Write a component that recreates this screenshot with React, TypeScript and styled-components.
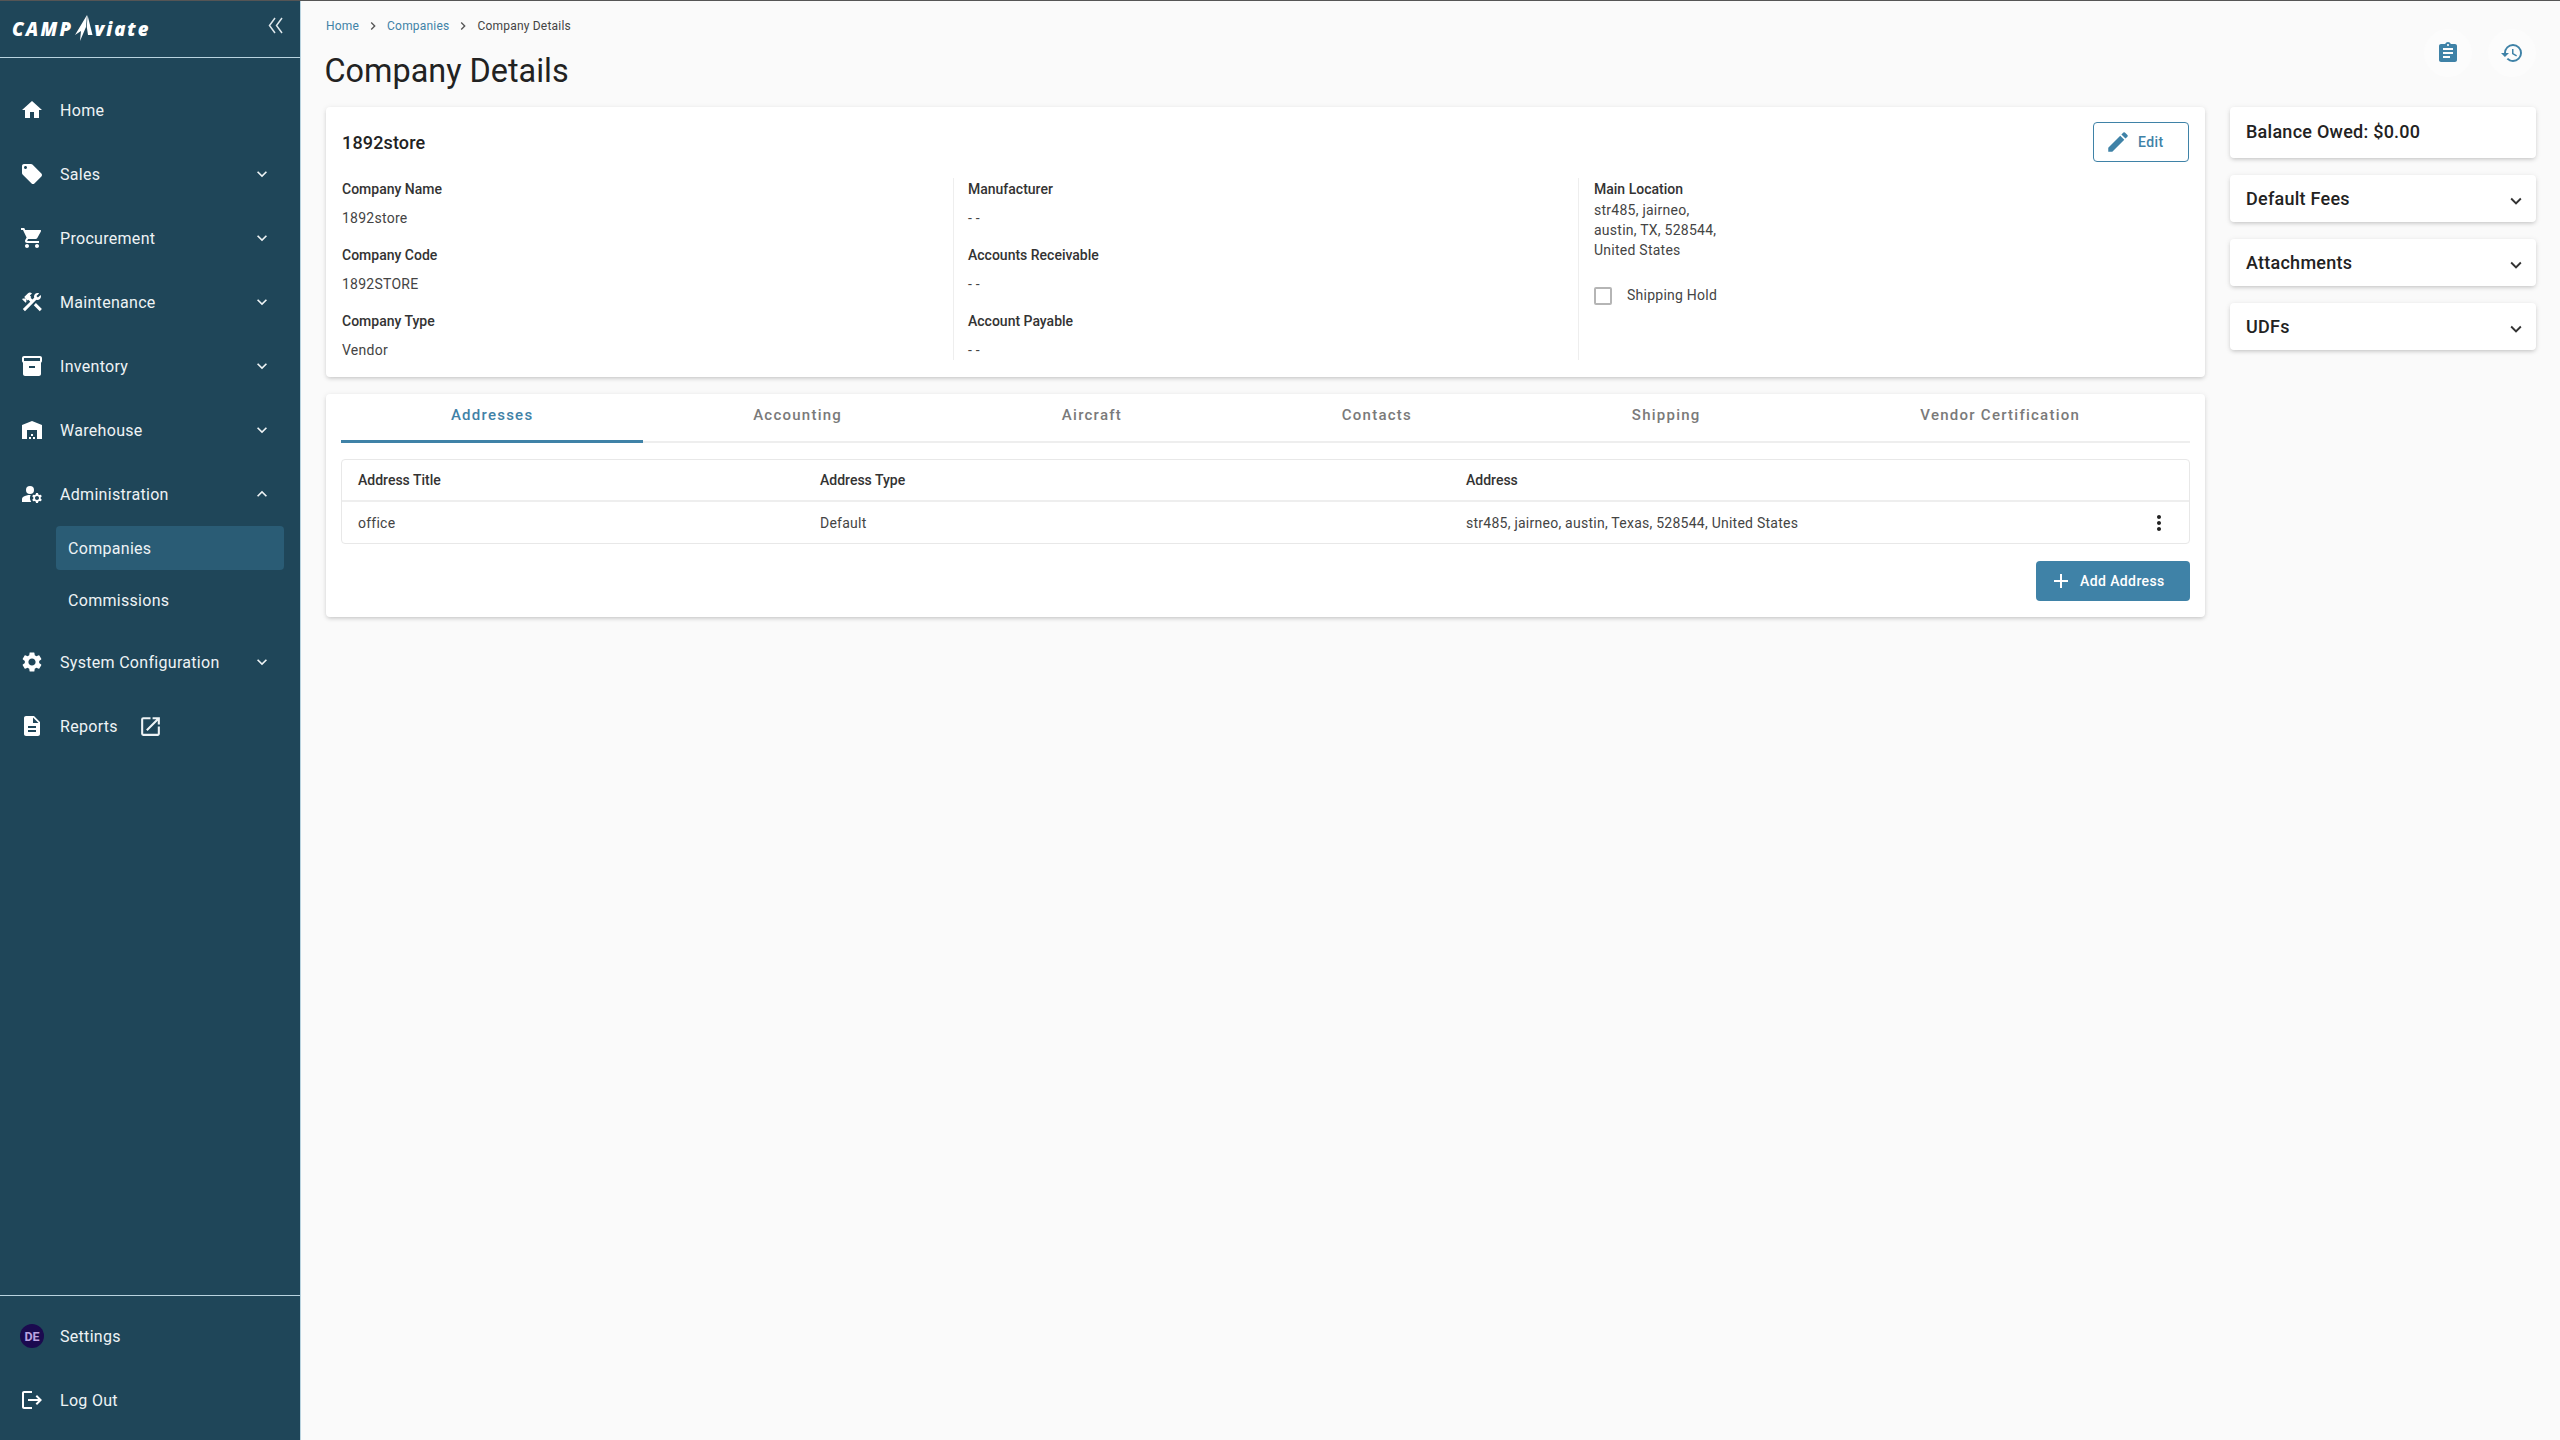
import React from 'react';
import styled, { createGlobalStyle } from 'styled-components';
import {
  MdHome,
  MdLocalOffer,
  MdShoppingCart,
  MdConstruction,
  MdInventory2,
  MdWarehouse,
  MdManageAccounts,
  MdSettings,
  MdDescription,
  MdOpenInNew,
  MdLogout,
  MdExpandMore,
  MdExpandLess,
  MdEdit,
  MdAdd,
  MdMoreVert,
  MdAssignment,
  MdHistory,
  MdChevronRight,
} from 'react-icons/md';

const GlobalStyle = createGlobalStyle`
  html, body {
    margin: 0;
    padding: 0;
    background: #fafafa;
    font-family: Roboto, "Liberation Sans", sans-serif;
    color: #222;
  }
  * { box-sizing: border-box; }
`;

const navItems = [
  { label: 'Home', icon: MdHome },
  { label: 'Sales', icon: MdLocalOffer, arrow: 'down' },
  { label: 'Procurement', icon: MdShoppingCart, arrow: 'down' },
  { label: 'Maintenance', icon: MdConstruction, arrow: 'down' },
  { label: 'Inventory', icon: MdInventory2, arrow: 'down' },
  { label: 'Warehouse', icon: MdWarehouse, arrow: 'down' },
  { label: 'Administration', icon: MdManageAccounts, arrow: 'up', children: ['Companies', 'Commissions'] },
  { label: 'System Configuration', icon: MdSettings, arrow: 'down' },
];

const fields = [
  [
    { label: 'Company Name', value: '1892store' },
    { label: 'Company Code', value: '1892STORE' },
    { label: 'Company Type', value: 'Vendor' },
  ],
  [
    { label: 'Manufacturer', value: '- -' },
    { label: 'Accounts Receivable', value: '- -' },
    { label: 'Account Payable', value: '- -' },
  ],
];

const tabs = ['Addresses', 'Accounting', 'Aircraft', 'Contacts', 'Shipping', 'Vendor Certification'];

const App: React.FC = () => {
  return (
    <Page>
      <GlobalStyle />
      <Sidebar>
        <Brand>
          <Logo>
            <LogoCamp>CAMP</LogoCamp>
            <LogoSpike viewBox="0 0 19 28" aria-hidden="true">
              <path d="M13 1 L1 21 L7 17 L6 27 L12 13 Z M13.5 1 L18.5 21 L14 21 L12.8 13 Z" fill="#fff" />
            </LogoSpike>
            <LogoRest>viate</LogoRest>
          </Logo>
          <CollapseButton>
            <svg width="15" height="17" viewBox="0 0 15 17" fill="none" stroke="currentColor" strokeWidth="1.5">
              <path d="M7 1 L1.5 8.5 L7 16" />
              <path d="M14 1 L8.5 8.5 L14 16" />
            </svg>
          </CollapseButton>
        </Brand>
        <NavList>
          {navItems.map((item) => (
            <React.Fragment key={item.label}>
              <NavItem>
                <NavIcon>
                  <item.icon size={24} />
                </NavIcon>
                <NavLabel>{item.label}</NavLabel>
                {item.arrow === 'down' && <NavArrow><MdExpandMore size={20} /></NavArrow>}
                {item.arrow === 'up' && <NavArrow><MdExpandLess size={20} /></NavArrow>}
              </NavItem>
              {item.children && (
                <SubList>
                  {item.children.map((child) => (
                    <SubItem key={child} $active={child === 'Companies'}>{child}</SubItem>
                  ))}
                </SubList>
              )}
            </React.Fragment>
          ))}
          <NavItem>
            <NavIcon>
              <MdDescription size={24} />
            </NavIcon>
            <NavLabel>Reports</NavLabel>
            <ExternalIcon><MdOpenInNew size={25} /></ExternalIcon>
          </NavItem>
        </NavList>
        <SidebarFooter>
          <NavItem>
            <NavIcon>
              <Avatar>DE</Avatar>
            </NavIcon>
            <NavLabel>Settings</NavLabel>
          </NavItem>
          <NavItem>
            <NavIcon>
              <MdLogout size={24} />
            </NavIcon>
            <NavLabel>Log Out</NavLabel>
          </NavItem>
        </SidebarFooter>
      </Sidebar>

      <Main>
        <PageHeader>
          <div>
            <Breadcrumbs>
              <Crumb>Home</Crumb>
              <MdChevronRight size={16} />
              <Crumb>Companies</Crumb>
              <MdChevronRight size={16} />
              <CurrentCrumb>Company Details</CurrentCrumb>
            </Breadcrumbs>
            <Title>Company Details</Title>
          </div>
          <HeaderActions>
            <RoundButton><MdAssignment size={24} /></RoundButton>
            <RoundButton><MdHistory size={24} /></RoundButton>
          </HeaderActions>
        </PageHeader>

        <Columns>
          <LeftColumn>
            <DetailsCard>
              <CardHeader>
                <CompanyName>1892store</CompanyName>
                <EditButton>
                  <MdEdit size={26} />
                  Edit
                </EditButton>
              </CardHeader>
              <DetailsGrid>
                {fields.map((col, i) => (
                  <DetailColumn key={i} $middle={i === 1}>
                    {col.map((field) => (
                      <Field key={field.label}>
                        <FieldLabel>{field.label}</FieldLabel>
                        <FieldValue>{field.value}</FieldValue>
                      </Field>
                    ))}
                  </DetailColumn>
                ))}
                <DetailColumn>
                  <FieldLabel>Main Location</FieldLabel>
                  <AddressLine>str485, jairneo,</AddressLine>
                  <AddressLine>austin, TX, 528544,</AddressLine>
                  <AddressLine>United States</AddressLine>
                  <CheckRow>
                    <CheckBox />
                    <span>Shipping Hold</span>
                  </CheckRow>
                </DetailColumn>
              </DetailsGrid>
            </DetailsCard>

            <TabsCard>
              <TabList>
                {tabs.map((tab) => (
                  <Tab key={tab} $active={tab === 'Addresses'}>{tab}</Tab>
                ))}
              </TabList>
              <Table>
                <TableHead>
                  <HeadCell>Address Title</HeadCell>
                  <HeadCell>Address Type</HeadCell>
                  <HeadCell>Address</HeadCell>
                </TableHead>
                <TableRow>
                  <Cell>office</Cell>
                  <Cell>Default</Cell>
                  <Cell>str485, jairneo, austin, Texas, 528544, United States</Cell>
                  <RowMenu><MdMoreVert size={24} /></RowMenu>
                </TableRow>
              </Table>
              <TableActions>
                <AddButton>
                  <MdAdd size={24} />
                  Add Address
                </AddButton>
              </TableActions>
            </TabsCard>
          </LeftColumn>

          <RightColumn>
            <BalanceCard>Balance Owed: $0.00</BalanceCard>
            {['Default Fees', 'Attachments', 'UDFs'].map((name) => (
              <AccordionCard key={name}>
                <span>{name}</span>
                <AccordionArrow><MdExpandMore size={22} /></AccordionArrow>
              </AccordionCard>
            ))}
          </RightColumn>
        </Columns>
      </Main>
    </Page>
  );
};

const Page = styled.div`
  display: flex;
  min-height: 100vh;
  border-top: 1px solid #555;
`;

const Sidebar = styled.aside`
  width: 301px;
  flex-shrink: 0;
  height: 1439px;
  display: flex;
  flex-direction: column;
  background: #1f4659;
  border-right: 1px solid #b9d3df;
  color: #eef3f5;
`;

const Brand = styled.div`
  height: 57px;
  display: flex;
  justify-content: space-between;
  align-items: center;
  padding: 0 17px 0 12px;
  border-bottom: 1px solid #b9d3df;
`;

const Logo = styled.div`
  display: flex;
  align-items: center;
  color: #fff;
  font-family: "Open Sans", "Liberation Sans", sans-serif;
  font-style: italic;
  font-weight: 800;
  line-height: 1;
  padding-top: 1px;
`;

const LogoCamp = styled.span`
  font-size: 18.5px;
  letter-spacing: 2.2px;
`;

const LogoSpike = styled.svg`
  width: 19px;
  height: 28px;
  margin: -3px 0 0 1px;
`;

const LogoRest = styled.span`
  font-size: 18.5px;
  letter-spacing: 1.9px;
  margin-left: 1px;
`;

const CollapseButton = styled.div`
  display: flex;
  margin-top: -7px;
  color: #dfe8ec;
`;

const NavList = styled.nav`
  flex: 1;
  padding-top: 20px;
`;

const NavItem = styled.div`
  height: 64px;
  display: flex;
  align-items: center;
  padding-left: 20px;
  padding-right: 28px;
`;

const NavIcon = styled.div`
  width: 24px;
  height: 24px;
  margin-right: 16px;
  display: flex;
  align-items: center;
  justify-content: center;
  color: #fff;
`;

const NavLabel = styled.span`
  font-size: 16px;
  letter-spacing: 0.3px;
  color: #eef3f5;
`;

const NavArrow = styled.span`
  margin-left: auto;
  display: flex;
  color: #eef3f5;
`;

const ExternalIcon = styled.span`
  display: flex;
  margin-left: 20px;
  color: #eef3f5;
`;

const SubList = styled.div`
  display: flex;
  flex-direction: column;
  gap: 8px;
  padding: 0 16px 8px 56px;
`;

const SubItem = styled.div<{ $active?: boolean }>`
  height: 44px;
  display: flex;
  align-items: center;
  padding-left: 12px;
  border-radius: 4px;
  font-size: 16px;
  letter-spacing: 0.3px;
  background: ${(p) => (p.$active ? '#2a5c75' : 'transparent')};
`;

const SidebarFooter = styled.div`
  border-top: 1px solid #b9d3df;
  padding: 8px 0;
`;

const Avatar = styled.div`
  flex-shrink: 0;
  width: 24px;
  height: 24px;
  border-radius: 50%;
  background: #1b0a4f;
  color: #bba3e0;
  font-size: 12.5px;
  font-weight: 700;
  display: flex;
  align-items: center;
  justify-content: center;
`;

const Main = styled.main`
  flex: 1;
  min-width: 0;
  padding: 0 24px 0 25px;
`;

const PageHeader = styled.header`
  display: flex;
  justify-content: space-between;
  align-items: flex-start;
  padding-top: 16px;
  height: 106px;
`;

const Breadcrumbs = styled.div`
  display: flex;
  align-items: center;
  gap: 6px;
  height: 18px;
  font-size: 12px;
  letter-spacing: 0.2px;
  color: #555;
  svg { color: #555; }
`;

const Crumb = styled.span`
  color: #3f82a7;
`;

const CurrentCrumb = styled.span`
  color: #444;
`;

const Title = styled.h1`
  margin: 16px 0 0 -1.5px;
  font-size: 32.4px;
  line-height: 40px;
  font-weight: 400;
  color: #222;
`;

const HeaderActions = styled.div`
  display: flex;
  gap: 16px;
  margin-top: 12px;
`;

const RoundButton = styled.div`
  width: 48px;
  height: 48px;
  border-radius: 50%;
  background: #fcfcfc;
  color: #3f82a7;
  display: flex;
  align-items: center;
  justify-content: center;
`;

const Columns = styled.div`
  display: flex;
  gap: 25px;
  align-items: flex-start;
`;

const LeftColumn = styled.div`
  flex: 1;
  min-width: 0;
  display: flex;
  flex-direction: column;
  gap: 17px;
`;

const RightColumn = styled.div`
  width: 306px;
  flex-shrink: 0;
  display: flex;
  flex-direction: column;
  gap: 17px;
`;

const Card = styled.section`
  background: #fff;
  border-radius: 4px;
  box-shadow: 0 2px 4px -1px rgba(0, 0, 0, 0.18), 0 1px 6px rgba(0, 0, 0, 0.08);
`;

const DetailsCard = styled(Card)`
  padding: 15px 16px 17px;
`;

const CardHeader = styled.div`
  display: flex;
  justify-content: space-between;
  align-items: center;
  margin-bottom: 16px;
`;

const CompanyName = styled.h2`
  margin: 0;
  font-size: 18px;
  font-weight: 500;
  letter-spacing: 0.15px;
  color: #222;
`;

const EditButton = styled.button`
  width: 96px;
  height: 40px;
  display: flex;
  align-items: center;
  gap: 7px;
  padding: 0 0 0 11px;
  background: #fff;
  border: 1.5px solid #3f82a7;
  border-radius: 4px;
  color: #3f82a7;
  font-family: inherit;
  font-size: 14px;
  font-weight: 500;
  letter-spacing: 0.4px;
`;

const DetailsGrid = styled.div`
  display: grid;
  grid-template-columns: 611px 626px 1fr;
`;

const DetailColumn = styled.div<{ $middle?: boolean }>`
  height: 182px;
  padding-left: ${(p) => (p.$middle ? '14px' : '0')};
  border-left: ${(p) => (p.$middle ? '1px solid #eee' : 'none')};
  border-right: ${(p) => (p.$middle ? '1px solid #eee' : 'none')};
  &:last-child { padding-left: 15px; }
`;

const Field = styled.div`
  margin-bottom: 15px;
`;

const FieldLabel = styled.div`
  font-size: 14px;
  line-height: 22px;
  font-weight: 500;
  color: #333;
`;

const FieldValue = styled.div`
  margin-top: 7px;
  font-size: 14px;
  line-height: 22px;
  letter-spacing: 0.25px;
  color: #444;
`;

const AddressLine = styled.div`
  font-size: 14px;
  line-height: 20px;
  letter-spacing: 0.25px;
  color: #444;
`;

const CheckRow = styled.div`
  display: flex;
  align-items: center;
  gap: 15px;
  margin-top: 25px;
  font-size: 14px;
  letter-spacing: 0.25px;
  color: #444;
`;

const CheckBox = styled.span`
  width: 18px;
  height: 18px;
  margin-top: 2px;
  border: 2px solid #b5b5b5;
  border-radius: 2px;
`;

const TabsCard = styled(Card)`
  padding: 0 15px 16px;
`;

const TabList = styled.div`
  display: flex;
  height: 49px;
  border-bottom: 2px solid #eee;
  margin-bottom: 16px;
`;

const Tab = styled.div<{ $active?: boolean }>`
  flex: 1 1 auto;
  height: 49px;
  padding: 12px 0 0;
  text-align: center;
  font-size: 15px;
  line-height: 18px;
  font-weight: 500;
  letter-spacing: 1.25px;
  color: ${(p) => (p.$active ? '#3f82a7' : '#7a7a7a')};
  border-bottom: ${(p) => (p.$active ? '3px solid #3f82a7' : 'none')};
`;

const Table = styled.div`
  border: 1px solid #e8e8e8;
  border-radius: 4px;
`;

const rowColumns = `
  display: grid;
  grid-template-columns: 462px 646px 1fr 60px;
  align-items: center;
  padding-left: 16px;
`;

const TableHead = styled.div`
  ${rowColumns}
  height: 42px;
  border-bottom: 2px solid #eee;
`;

const TableRow = styled.div`
  ${rowColumns}
  height: 41px;
`;

const HeadCell = styled.div`
  font-size: 14px;
  font-weight: 500;
  color: #333;
`;

const Cell = styled.div`
  font-size: 14px;
  letter-spacing: 0.25px;
  color: #444;
`;

const RowMenu = styled.div`
  display: flex;
  padding-left: 18px;
  color: #222;
`;

const TableActions = styled.div`
  display: flex;
  justify-content: flex-end;
  margin-top: 17px;
`;

const AddButton = styled.button`
  width: 154px;
  height: 40px;
  display: flex;
  align-items: center;
  gap: 7px;
  padding: 0 0 0 13px;
  background: #3f82a7;
  border: none;
  border-radius: 4px;
  color: #fff;
  font-family: inherit;
  font-size: 14px;
  font-weight: 500;
  letter-spacing: 0.4px;
`;

const BalanceCard = styled(Card)`
  height: 51px;
  display: flex;
  align-items: center;
  padding: 0 16px 2px;
  font-size: 18px;
  font-weight: 500;
  letter-spacing: 0.25px;
  color: #222;
`;

const AccordionCard = styled(Card)`
  height: 47px;
  display: flex;
  align-items: center;
  justify-content: space-between;
  padding: 0 9px 1px 16px;
  font-size: 18px;
  font-weight: 500;
  letter-spacing: 0.25px;
  color: #222;
`;

const AccordionArrow = styled.span`
  display: flex;
  margin-top: 6px;
  color: #333;
`;

export default App;
